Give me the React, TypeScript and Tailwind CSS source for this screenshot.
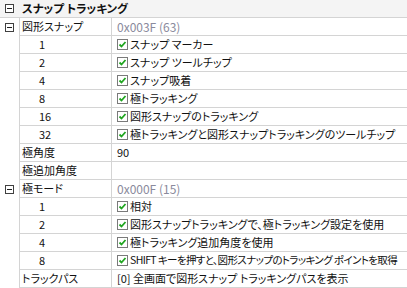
import React from "react";

type Row = {
  name: string;
  child?: boolean;
  toggle?: boolean;
  value?: string;
  gray?: boolean;
  check?: boolean;
  tight?: boolean;
};

const rows: Row[] = [
  { name: "図形スナップ", toggle: true, value: "0x003F (63)", gray: true },
  { name: "1", child: true, value: "スナップ マーカー", check: true },
  { name: "2", child: true, value: "スナップ ツールチップ", check: true },
  { name: "4", child: true, value: "スナップ吸着", check: true },
  { name: "8", child: true, value: "極トラッキング", check: true },
  { name: "16", child: true, value: "図形スナップのトラッキング", check: true },
  { name: "32", child: true, value: "極トラッキングと図形スナップトラッキングのツールチップ", check: true },
  { name: "極角度", value: "90" },
  { name: "極追加角度", value: "" },
  { name: "極モード", toggle: true, value: "0x000F (15)", gray: true },
  { name: "1", child: true, value: "相対", check: true },
  { name: "2", child: true, value: "図形スナップトラッキングで、極トラッキング設定を使用", check: true },
  { name: "4", child: true, value: "極トラッキング追加角度を使用", check: true },
  { name: "8", child: true, value: "SHIFT キーを押すと、図形スナップのトラッキング ポイントを取得", check: true, tight: true },
  { name: "トラックパス", value: "[0] 全画面で図形スナップ トラッキングパスを表示" },
];

function Toggle() {
  return (
    <div className="relative w-[9px] h-[9px] border border-[#404040] bg-white">
      <div className="absolute left-[1px] right-[1px] top-[3px] h-px bg-[#202020]" />
    </div>
  );
}

function Check() {
  return (
    <div className="w-[11px] h-[11px] border border-[#7a7a7a] bg-white flex items-center justify-center shrink-0">
      <svg width="9" height="9" viewBox="0 0 9 9">
        <path d="M1.5 4.5 L3.5 6.5 L7.5 2" stroke="#1fa51f" strokeWidth="1.8" fill="none" />
      </svg>
    </div>
  );
}

export default function App() {
  return (
    <div
      className="w-[407px] h-[288px] bg-white text-[11px] text-[#111] leading-none overflow-hidden [font-feature-settings:'palt']"
      style={{ fontFamily: '"Noto Sans CJK JP", "Noto Sans", sans-serif' }}
    >
      <div className="flex h-[18px] bg-[#f4f4f4] border-b border-[#d4d4d4]">
        <div className="w-[19px] shrink-0 flex items-center justify-center">
          <Toggle />
        </div>
        <div className="flex items-center pl-[3px] font-bold text-[11.5px]">スナップ トラッキング</div>
      </div>
      {rows.map((r, i) => (
        <div key={i} className="flex h-[18px]">
          <div className="w-[19px] shrink-0 flex items-center justify-center">{r.toggle ? <Toggle /> : null}</div>
          <div
            className={`w-[93px] shrink-0 border-l border-r border-b border-[#d4d4d4] flex items-center ${
              r.child ? "pl-[19px]" : "pl-[2px]"
            }`}
          >
            {r.name}
          </div>
          <div className="flex-1 min-w-0 overflow-hidden border-b border-[#d4d4d4] flex items-center pl-[5px] whitespace-nowrap">
            {r.check ? (
              <>
                <Check />
                <span className={r.tight ? "ml-[2px] text-[10.5px] tracking-[-0.6px]" : "ml-[2px]"}>{r.value}</span>
              </>
            ) : (
              <span className={r.gray ? "text-[#8a8a9c] text-[12px]" : ""}>{r.value}</span>
            )}
          </div>
        </div>
      ))}
    </div>
  );
}
